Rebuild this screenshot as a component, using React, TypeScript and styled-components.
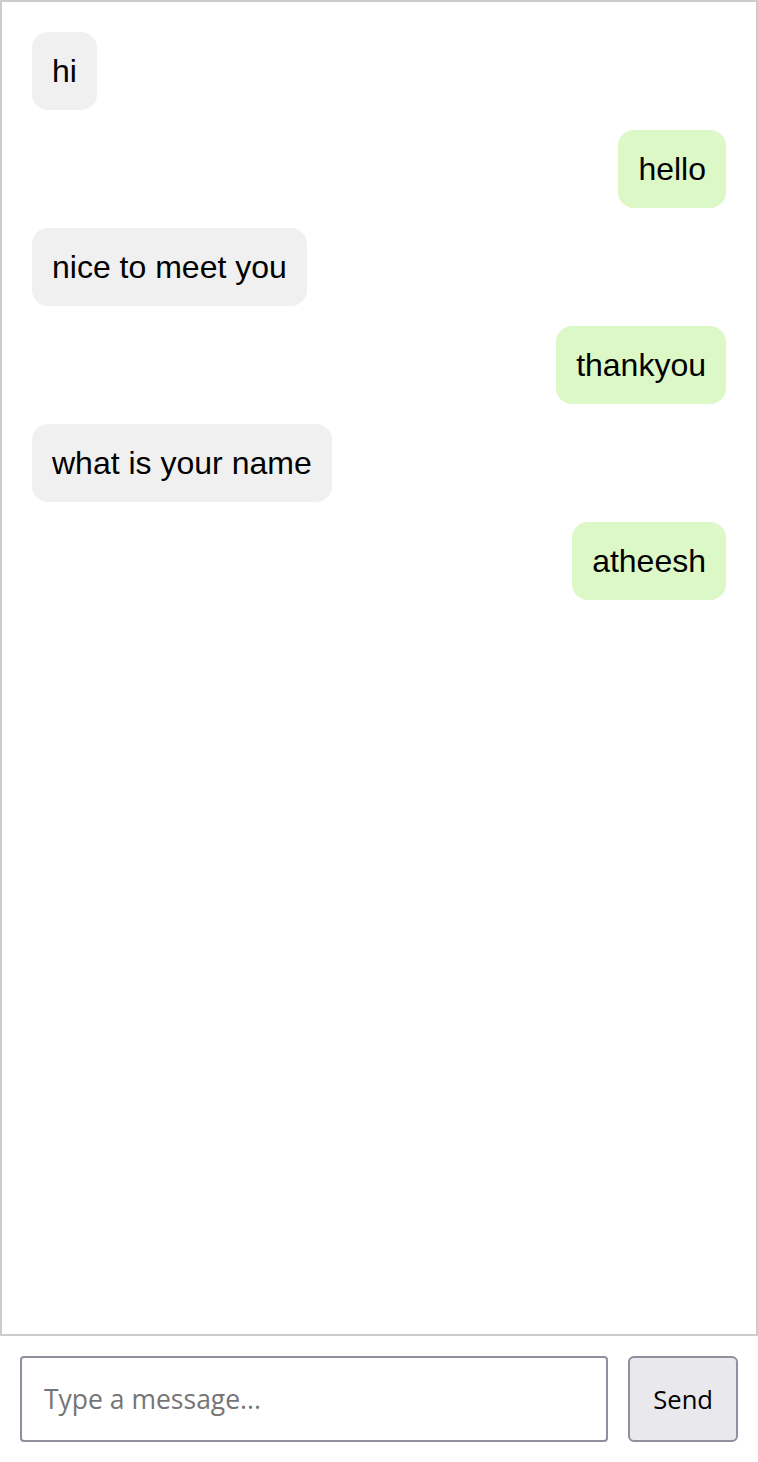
import React from "react";
import styled, { createGlobalStyle } from "styled-components";

const GlobalStyle = createGlobalStyle`
  html, body { margin: 0; padding: 0; background: #fff; }
  body { font-family: "Liberation Sans", Arial, sans-serif; }
  * { box-sizing: border-box; }
`;

const Page = styled.div`
  display: flex;
  flex-direction: column;
  height: 1462px;
`;

const ChatWindow = styled.div`
  flex: 1;
  border: 2px solid #cccccc;
  padding: 30px;
  display: flex;
  flex-direction: column;
  gap: 20px;
  overflow-y: auto;
`;

const Bubble = styled.div<{ $mine?: boolean }>`
  align-self: ${(p) => (p.$mine ? "flex-end" : "flex-start")};
  background: ${(p) => (p.$mine ? "#dcf8c6" : "#f0f0f0")};
  color: #000;
  font-family: "Liberation Sans", Arial, sans-serif;
  font-size: 32px;
  line-height: 38px;
  padding: 20px;
  border-radius: 16px;
`;

const Composer = styled.div`
  display: flex;
  gap: 20px;
  padding: 20px;
`;

const Input = styled.input`
  flex: 1;
  height: 86px;
  padding: 0 22px;
  border: 2px solid #8f8f9d;
  border-radius: 4px;
  font-family: "Open Sans", sans-serif;
  font-size: 26.5px;
  color: #000;
  background: #fff;
  outline: none;
  &::placeholder { color: #757575; }
`;

const SendButton = styled.button`
  height: 86px;
  padding: 0 23px;
  border: 2px solid #8f8f9d;
  border-radius: 6px;
  background: #e9e9ed;
  font-family: "Open Sans", sans-serif;
  font-size: 25.6px;
  color: #000;
`;

const messages = [
  { text: "hi", mine: false },
  { text: "hello", mine: true },
  { text: "nice to meet you", mine: false },
  { text: "thankyou", mine: true },
  { text: "what is your name", mine: false },
  { text: "atheesh", mine: true },
];

export default function App() {
  return (
    <>
      <GlobalStyle />
      <Page>
        <ChatWindow>
          {messages.map((m, i) => (
            <Bubble key={i} $mine={m.mine}>
              {m.text}
            </Bubble>
          ))}
        </ChatWindow>
        <Composer>
          <Input placeholder="Type a message..." />
          <SendButton>Send</SendButton>
        </Composer>
      </Page>
    </>
  );
}
